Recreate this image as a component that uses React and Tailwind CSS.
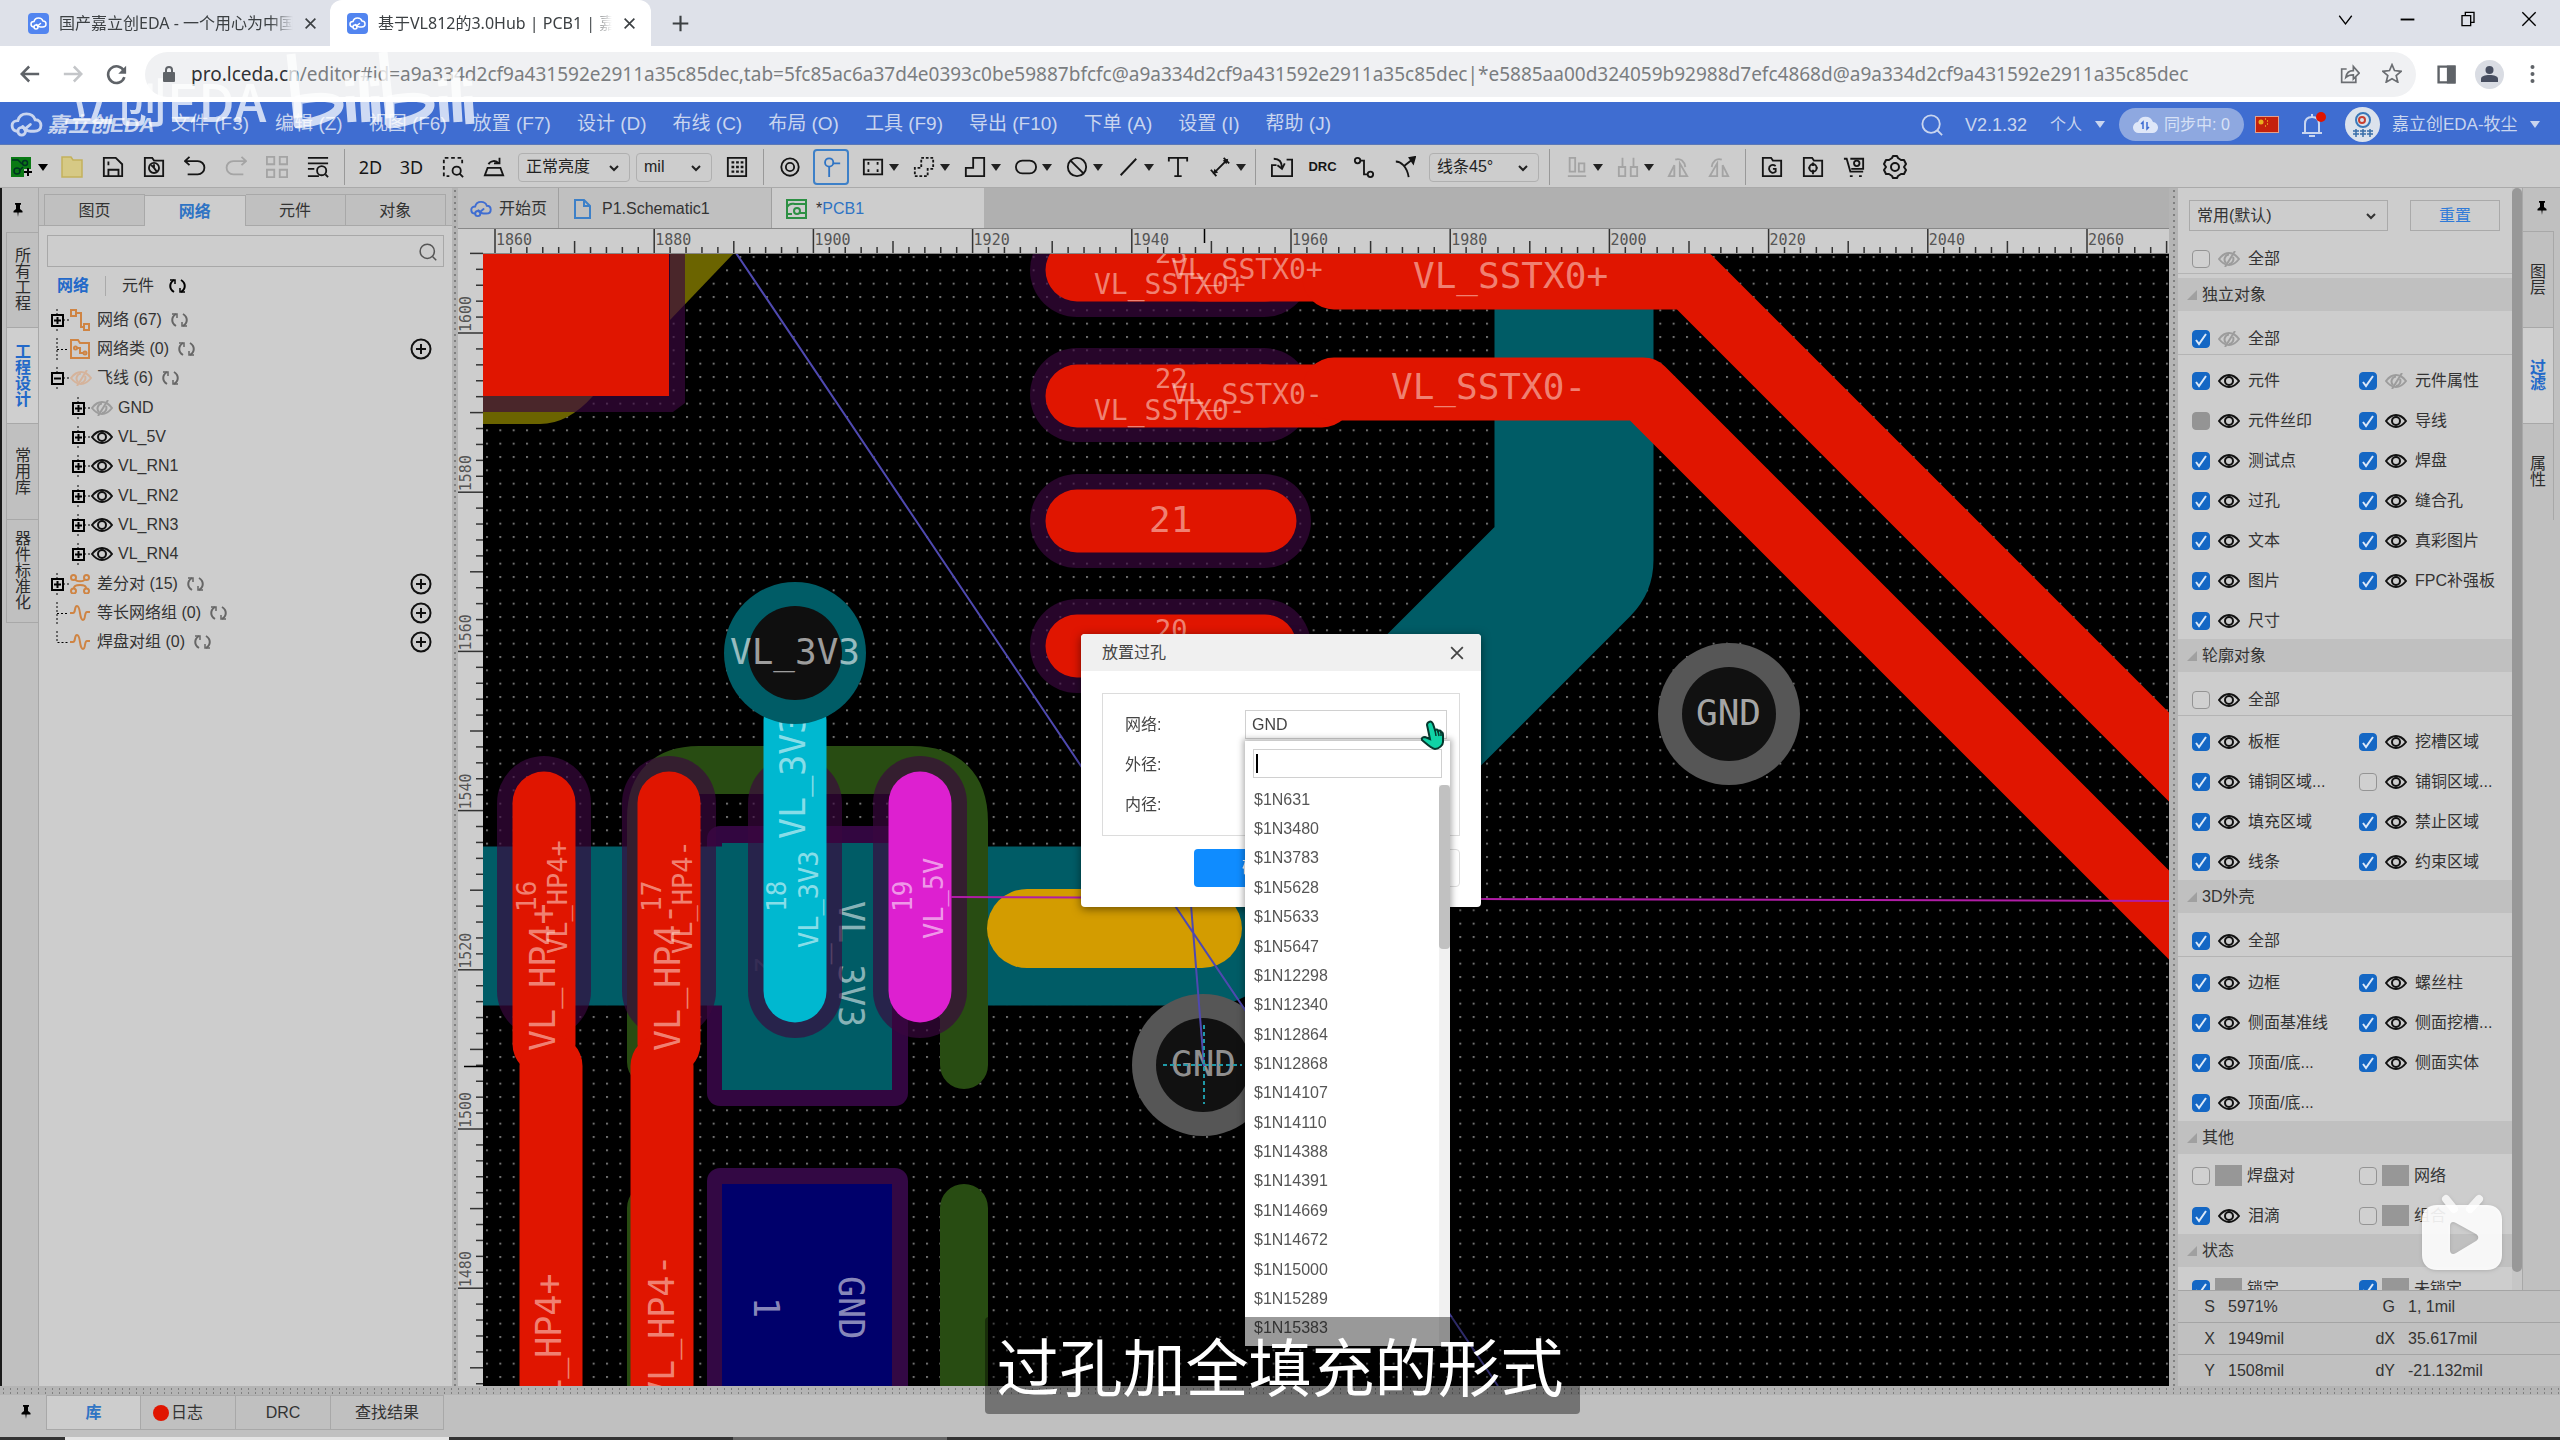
import React from "react";

function Icon({ children, w = 22, h = 22, vb = "0 0 24 24", className = "", sw = 2 }) {
  return (
    <svg width={w} height={h} viewBox={vb} fill="none" stroke="currentColor" strokeWidth={sw} className={"shrink-0 " + className} aria-hidden="true">
      {children}
    </svg>
  );
}

function Caret({ className = "" }) {
  return (
    <svg width="10" height="7" viewBox="0 0 10 7" className={"shrink-0 " + className} aria-hidden="true">
      <path d="M0 0h10L5 7z" fill="currentColor" />
    </svg>
  );
}

function Chevron({ className = "" }) {
  return (
    <Icon w={10} h={8} vb="0 0 10 8" sw={2} className={className}>
      <path d="M1 2l4 4 4-4" />
    </Icon>
  );
}

function Cloud({ w, h, className = "" }) {
  return (
    <Icon w={w} h={h} vb="0 0 34 26" sw={3} className={className}>
      <path d="M8 20C3 20 2 16 2 14c0-3 3-5 6-5 1-4 4-7 9-7 5 0 8 3 9 6 4 0 6 3 6 6 0 4-3 6-7 6h-4c-4 0-6-2-8-5" strokeLinecap="round" />
      <circle cx="12" cy="20" r="4" />
      <path d="M15 18l6-5" strokeLinecap="round" />
    </Icon>
  );
}

function Pin() {
  return (
    <svg width="10" height="14" viewBox="0 0 10 14" aria-hidden="true">
      <path d="M2 0h6v1.500l-1 .5v4l2.500 2v1.500H5.600L5 14l-.6-4.500H.5V8L3 6V2l-1-.5z" fill="#000" />
    </svg>
  );
}

function Refresh({ className = "text-[#666]" }) {
  return (
    <Icon w={17} h={16} vb="0 0 17 16" sw={2} className={className}>
      <path d="M5 14C0 11 0 5 5 2M12 2c5 3 5 9 0 12" />
      <path d="M1 2h5v4M16 14h-5v-4" strokeWidth="1.500" />
    </Icon>
  );
}

function Eye({ off }) {
  return off ? (
    <Icon w={22} h={16} vb="0 0 22 16" sw={2} className="opacity-70">
      <path d="M1 8c3-4 6-6 10-6s7 2 10 6c-3 4-6 6-10 6S4 12 1 8z" />
      <path d="M8 12a5 5 0 0 1 3-8.500M11 13a5 5 0 0 0 4-7M17 0L7 16" />
    </Icon>
  ) : (
    <Icon w={22} h={16} vb="0 0 22 16" sw={2}>
      <path d="M1 8c3-4 6-6 10-6s7 2 10 6c-3 4-6 6-10 6S4 12 1 8z" />
      <circle cx="11" cy="8" r="4" />
    </Icon>
  );
}

function Plus() {
  return (
    <Icon w={22} h={22} vb="0 0 22 22" sw={2}>
      <circle cx="11" cy="11" r="9.500" />
      <path d="M11 6v10M6 11h10" />
    </Icon>
  );
}

/* ---------- browser chrome ---------- */

function Favicon() {
  return (
    <span className="grid h-[21px] w-[21px] shrink-0 place-items-center rounded bg-[#5285f0] text-white">
      <Cloud w={17} h={13} />
    </span>
  );
}

function TabStrip() {
  return (
    <div className="flex h-[46px] items-stretch bg-[#dee1e9] font-['Noto_Sans','Noto_Sans_CJK_SC',sans-serif] text-base text-[#3c4043]">
      <div className="flex w-[330px] items-center pl-[28px] pr-2">
        <Favicon />
        <span className="ml-[10px] w-[234px] overflow-hidden whitespace-nowrap mask-r-from-90%">国产嘉立创EDA - 一个用心为中国人</span>
        <button aria-label="关闭标签页" className="ml-[11px]">
          <Icon w={13} h={13} sw={3}><path d="M3 3l18 18M21 3L3 21" /></Icon>
        </button>
      </div>
      <div className="flex w-[321px] items-center rounded-t-xl bg-white pl-[17px] pr-2">
        <Favicon />
        <span className="ml-[10px] w-[234px] overflow-hidden whitespace-nowrap mask-r-from-90%">基于VL812的3.0Hub | PCB1 | 嘉立创EDA</span>
        <button aria-label="关闭标签页" className="ml-[11px]">
          <Icon w={13} h={13} sw={3}><path d="M3 3l18 18M21 3L3 21" /></Icon>
        </button>
      </div>
      <button aria-label="新标签页" className="w-[58px] grid place-items-center">
        <Icon w={17} h={17} sw={3}><path d="M12 1v22M1 12h22" /></Icon>
      </button>
      <div className="flex-1" />
      <div className="flex h-[38px] text-black">
        <button aria-label="搜索标签页" className="grid w-[62px] place-items-center">
          <Icon w={15} h={15} sw={2}><path d="M2 6l10 13L22 6" /></Icon>
        </button>
        <button aria-label="最小化" className="grid w-[62px] place-items-center">
          <Icon w={15} h={15} sw={3}><path d="M1 12h22" /></Icon>
        </button>
        <button aria-label="还原" className="grid w-[60px] place-items-center">
          <Icon w={16} h={16} sw={2}><path d="M3 7h13v15H3zM8 6V2h13v15h-4" /></Icon>
        </button>
        <button aria-label="关闭" className="grid w-[62px] place-items-center">
          <Icon w={16} h={16} sw={2}><path d="M2 2l20 20M22 2L2 22" /></Icon>
        </button>
      </div>
    </div>
  );
}

function AddressBar() {
  return (
    <div className="flex h-14 items-center bg-white font-['Noto_Sans',sans-serif]">
      <div className="flex w-[145px] items-center gap-[23px] pl-5 text-[#5f6368]">
        <button aria-label="后退"><Icon w={20} h={20} sw={3}><path d="M23 12H2M11 3l-9 9 9 9" /></Icon></button>
        <button aria-label="前进" className="text-[#c4c6c9]"><Icon w={20} h={20} sw={3}><path d="M1 12h21M13 3l9 9-9 9" /></Icon></button>
        <button aria-label="重新加载">
          <Icon w={21} h={21} sw={3}><path d="M20.500 8A9.500 9.500 0 1 0 21 15" /><path d="M23 2v9h-9z" fill="currentColor" stroke="none" /></Icon>
        </button>
      </div>
      <label className="flex h-[45px] flex-1 items-center rounded-full bg-[#f0f1f3] pl-[18px] pr-[14px]">
        <svg width="12" height="16" viewBox="0 0 12 16" className="shrink-0" aria-hidden="true">
          <rect y="6" width="12" height="10" rx="1" fill="#5f6368" />
          <path d="M3 6V4a3 3 0 0 1 6 0v2" fill="none" stroke="#5f6368" strokeWidth="2" />
        </svg>
        <span className="sr-only">地址</span>
        <span className="ml-4 flex-1 overflow-hidden whitespace-nowrap text-[19px] text-[#7a7d80]" role="textbox" tabIndex={0}>
          <span className="text-[#303236]">pro.lceda.cn</span>/editor#id=a9a334d2cf9a431592e2911a35c85dec,tab=5fc85ac6a37d4e0393c0be59887bfcfc@a9a334d2cf9a431592e2911a35c85dec|*e5885aa00d324059b92988d7efc4868d@a9a334d2cf9a431592e2911a35c85dec
        </span>
        <span className="flex gap-[22px] text-[#6b6e72]">
          <Icon w={20} h={22} sw={2}><path d="M8 6H2v16h17v-6M7 16c1-6 5-8 9-8V3l7 8-7 7v-5c-4 0-7 1-9 3z" /></Icon>
          <Icon w={20} h={20} sw={2}><path d="M12 2l3 7 8 1-6 5 2 8-7-4-7 4 2-8-6-5 8-1z" /></Icon>
        </span>
      </label>
      <div className="flex w-[144px] items-center pl-[21px] text-[#5f6368]">
        <Icon w={19} h={19} sw={3}><path d="M2 2h20v20H2z" /><path d="M14 2h8v20h-8z" fill="currentColor" /></Icon>
        <span className="ml-[19px] grid h-[29px] w-[29px] place-items-center rounded-full bg-[#d9dce3]">
          <svg width="17" height="17" viewBox="0 0 17 17" fill="#474e60" aria-hidden="true"><circle cx="8.500" cy="4" r="4" /><path d="M0 16v-3c0-3 4-4 8.500-4s8.500 1 8.500 4v3z" /></svg>
        </span>
        <button aria-label="菜单" className="ml-[26px]">
          <svg width="5" height="18" viewBox="0 0 5 18" fill="#5f6368" aria-hidden="true"><circle cx="2.500" cy="2" r="2" /><circle cx="2.500" cy="9" r="2" /><circle cx="2.500" cy="16" r="2" /></svg>
        </button>
      </div>
    </div>
  );
}

/* ---------- application bars ---------- */

const MENUS = ["文件 (F3)", "编辑 (Z)", "视图 (F6)", "放置 (F7)", "设计 (D)", "布线 (C)", "布局 (O)", "工具 (F9)", "导出 (F10)", "下单 (A)", "设置 (I)", "帮助 (J)"];

function MenuBar() {
  return (
    <div className="flex h-[43px] items-center border-b border-[#5a78b8] bg-[#3f6dd1] pt-[3px] text-[#c9d5ef]">
      <a href="#home" className="flex w-[158px] items-center pl-[10px]">
        <Cloud w={33} h={25} />
        <span className="ml-1 whitespace-nowrap text-[21px] font-bold italic">嘉立创EDA</span>
      </a>
      <nav className="flex text-[19px]">
        {MENUS.map((m) => (
          <button key={m} className="whitespace-nowrap px-[13px]">{m}</button>
        ))}
      </nav>
      <div className="flex-1" />
      <div className="flex shrink-0 items-center whitespace-nowrap text-base">
        <button aria-label="搜索"><Icon w={22} h={22} sw={2}><circle cx="11" cy="11" r="9.500" /><path d="M18 18l5 5" /></Icon></button>
        <span className="ml-[22px] w-[85px] text-lg">V2.1.32</span>
        <button className="flex w-[69px] items-center gap-[13px]">个人<Caret /></button>
        <button className="flex h-[33px] w-[125px] items-center rounded-full bg-[#8ea8e0] pl-[14px] text-[#d7e1f6]">
          <svg width="25" height="19" viewBox="0 0 25 19" aria-hidden="true">
            <path d="M6 18a5.500 5.500 0 0 1-1-11A8 8 0 0 1 20 7a5.500 5.500 0 0 1-1 11z" fill="#dfe7f8" />
            <path d="M10 14V7l-2 2M14 7v7l2-2" fill="none" stroke="#3f6dd1" strokeWidth="1.500" />
          </svg>
          <span className="ml-[6px]">同步中: 0</span>
        </button>
        <svg width="24" height="17" viewBox="0 0 24 17" className="ml-[11px]" aria-hidden="true">
          <rect width="24" height="17" fill="#e3a08c" /><rect x="1" y="1" width="22" height="15" fill="#c4210c" />
          <circle cx="6" cy="6" r="2.500" fill="#e8b020" /><path d="M10 3h1M12 5h1M12 8h1M10 10h1" stroke="#e8b020" strokeWidth="1.500" />
        </svg>
        <button aria-label="通知" className="ml-[22px] flex w-[44px]">
          <svg width="26" height="26" viewBox="0 0 26 26" fill="none" stroke="#c9d5ef" strokeWidth="2" aria-hidden="true">
            <path d="M1 21h20M4 21v-9c0-5 3-7 7-7s7 2 7 7v9M11 5V2M8 24h6" /><circle cx="20" cy="5" r="5" fill="#e01500" stroke="none" />
          </svg>
        </button>
        <span className="grid h-[35px] w-[35px] place-items-center rounded-full bg-[#dbe2ec]">
          <svg width="28" height="28" viewBox="0 0 28 28" fill="none" aria-hidden="true">
            <circle cx="14" cy="9" r="7" stroke="#3a78b8" strokeWidth="2" /><circle cx="13" cy="9" r="3" stroke="#c84030" strokeWidth="2" />
            <path d="M4 20h6M4 23h6M11 20h6M11 23h6M18 20h6M18 23h6M7 18v8M14 18v8M21 18v8" stroke="#3a6ea8" strokeWidth="1.500" />
          </svg>
        </span>
        <button className="ml-[12px] flex w-[168px] items-center gap-[12px] text-[17px]">嘉立创EDA-牧尘<Caret /></button>
      </div>
    </div>
  );
}

function Tool({ label, children, dim, active }) {
  return (
    <button aria-label={label} className={"grid h-9 w-[41px] shrink-0 place-items-center " + (dim ? "text-[#a4a4a4]" : "text-[#151515]")}>
      {active ? <span className="grid h-9 w-9 place-items-center rounded border-2 border-[#3d80c8] text-[#2f74c4]">{children}</span> : children}
    </button>
  );
}

function DropTool({ label, children, dim }) {
  return (
    <button aria-label={label} className={"flex h-9 w-[51px] shrink-0 items-center gap-[5px] pl-[11px] " + (dim ? "text-[#a4a4a4]" : "text-[#151515]")}>
      {children}
      <Caret className="text-[#222]" />
    </button>
  );
}

function Sep({ className = "" }) {
  return <div className={"flex h-9 w-3 shrink-0 justify-center " + className}><div className="w-px bg-[#999]" /></div>;
}

function ToolSelect({ label, value, className }) {
  return (
    <div className={"relative shrink-0 " + className}>
      <select aria-label={label} defaultValue={value} className="h-[29px] w-full appearance-none rounded-sm border border-[#b0b0b0] bg-transparent pl-[7px] text-base leading-[26px] text-[#222]">
        <option>{value}</option>
      </select>
      <Chevron className="pointer-events-none absolute right-[11px] top-[11px] text-[#222]" />
    </div>
  );
}

function Toolbar() {
  return (
    <div className="flex h-[43px] items-center border-b border-[#aaa] bg-[#cdcdcd] pl-[7px] pt-[2px]">
      <button aria-label="新建" className="flex h-9 w-[44px] shrink-0 items-center gap-[5px] pl-1">
        <svg width="22" height="22" viewBox="0 0 22 22" aria-hidden="true">
          <path d="M0 1h20v12h-7v8H0z" fill="#0a7a14" /><circle cx="6" cy="15" r="3" fill="none" stroke="#032" strokeWidth="1.500" />
          <circle cx="14" cy="7" r="2.500" fill="none" stroke="#032" strokeWidth="1.500" /><path d="M1 4h6l4 4M8 15l4-4" stroke="#032" strokeWidth="1.500" fill="none" />
          <path d="M17 12v8M13 16h8" stroke="#000" strokeWidth="2" />
        </svg>
        <Caret />
      </button>
      <Tool label="打开"><svg width="22" height="22" viewBox="0 0 22 22" aria-hidden="true"><path d="M1 1h9l2 3h9v17H1z" fill="#d6c985" stroke="#c3b15c" strokeWidth="1.500" /></svg></Tool>
      <Tool label="保存"><Icon><path d="M2 2h13l7 7v13H2zM7 22v-7h11v7M7 6v4" /></Icon></Tool>
      <Tool label="历史"><Icon><path d="M2 22V2h8l2 3h10v17z" /><circle cx="12" cy="13" r="5.500" /><path d="M12 9v4l3 4M9 10l3 3" /></Icon></Tool>
      <Tool label="撤销"><Icon><path d="M6 1L1 5.500 6 10M1 5.500h14a7 7 0 0 1 0 14.500H4" /></Icon></Tool>
      <Tool label="重做" dim><Icon><path d="M18 1l5 4.500-5 4.500M23 5.500H9A7 7 0 0 0 9 20h11" /></Icon></Tool>
      <Tool label="阵列" dim><Icon><path d="M1 1h8v8H1zM15 1h8v8h-8zM1 15h8v8H1zM15 15h8v8h-8z" /></Icon></Tool>
      <Tool label="查找"><Icon><path d="M1 2h22M1 8h22M1 14h7M1 22h12" /><circle cx="16" cy="16" r="5" /><path d="M20 20l3 3" /></Icon></Tool>
      <Sep />
      <Tool label="2D"><span className="font-['Noto_Sans',sans-serif] text-lg">2D</span></Tool>
      <Tool label="3D"><span className="font-['Noto_Sans',sans-serif] text-lg">3D</span></Tool>
      <Tool label="框选查找"><Icon><path d="M2 8V2h20v6M2 11v11h6" strokeDasharray="4 3" /><circle cx="16" cy="16" r="4.500" /><path d="M19 19l4 4" /></Icon></Tool>
      <Tool label="翻转"><Icon><path d="M5 13h14l3 8H2zM6 9c2-4 8-5 11-1M18 2v6h-6" /></Icon></Tool>
      <ToolSelect label="亮度" value="正常亮度" className="ml-1 w-[112px]" />
      <ToolSelect label="单位" value="mil" className="ml-[6px] w-[76px]" />
      <div className="w-1" />
      <Tool label="网格"><Icon><path d="M2 2h20v20H2z" /><path d="M6 7h3M11 7h3M16 7h3M6 12h3M11 12h3M16 12h3M6 17h3M11 17h3M16 17h3" strokeWidth="2.500" /></Icon></Tool>
      <Sep />
      <Tool label="焊盘"><Icon><circle cx="12" cy="12" r="9.500" /><circle cx="12" cy="12" r="4.500" /></Icon></Tool>
      <Tool label="过孔" active><Icon><circle cx="10" cy="7" r="4.500" /><path d="M14 8h8M10 12v11" /></Icon></Tool>
      <DropTool label="填充"><Icon><path d="M2 4h20v16H2z" /><path d="M6 8h2M16 8h2M6 16h2M16 16h2" strokeWidth="3" /></Icon></DropTool>
      <DropTool label="区域"><Icon><path d="M9 2h13v12h-6v8H2v-9h7z" strokeDasharray="3 2" /></Icon></DropTool>
      <DropTool label="铺铜"><Icon><path d="M10 2h12v20H2v-9h8z" /></Icon></DropTool>
      <DropTool label="形状"><Icon><rect x="1" y="5" width="22" height="14" rx="7" /></Icon></DropTool>
      <DropTool label="禁止"><Icon><circle cx="12" cy="12" r="10" /><path d="M5 5l14 14" /></Icon></DropTool>
      <DropTool label="线条"><Icon><path d="M4 21L21 3" /></Icon></DropTool>
      <Tool label="文本"><Icon><path d="M2 6V2h20v4M12 2v20M8 22h8" /></Icon></Tool>
      <DropTool label="尺寸"><Icon><path d="M5 19L20 4M2 15l6 7M16 2l6 6" /><path d="M4 20l2-6 4 4zM21 3l-6 2 4 4z" fill="currentColor" stroke="none" /></Icon></DropTool>
      <Sep />
      <Tool label="导入"><Icon><path d="M6 10H1v12h22V4h-6M3 3c5 0 9 3 9 10M7 10l5 4 3-6" /></Icon></Tool>
      <Tool label="设计规则检查"><span className="text-[13px] font-bold">DRC</span></Tool>
      <Tool label="布线"><Icon><circle cx="5" cy="5" r="3" /><circle cx="19" cy="20" r="3" /><path d="M8 5h4v15h4" /></Icon></Tool>
      <Tool label="差分布线"><Icon><path d="M2 6c5 0 12 5 14 17M11 11l10-8" /><path d="M17 2l6-1-2 7z" fill="currentColor" /></Icon></Tool>
      <ToolSelect label="线条角度" value="线条45°" className="ml-1 w-[110px]" />
      <Sep className="ml-1" />
      <DropTool label="对齐" dim><Icon><path d="M4 2h6v15H4zM14 8h6v9h-6zM2 22h20" /></Icon></DropTool>
      <DropTool label="分布" dim><Icon><path d="M2 12h7v10H2zM15 12h7v10h-7zM6 2v10M18 2v10" /></Icon></DropTool>
      <Tool label="左旋转" dim><Icon><path d="M8 10v12H2zM14 22V8l8 14zM9 4c6-2 10 2 11 8" /></Icon></Tool>
      <Tool label="右旋转" dim><Icon><path d="M16 10v12h6zM10 22V8L2 22zM15 4C9 2 5 6 4 12" /></Icon></Tool>
      <Sep />
      <Tool label="导出 Gerber"><Icon><path d="M2 22V2h9l2 3h9v17zM16 11c-4-3-8 0-7 4s5 4 7 2v-3h-3" /></Icon></Tool>
      <Tool label="导出坐标"><Icon><path d="M2 22V2h9l2 3h9v17z" /><circle cx="12" cy="13" r="4" /><path d="M12 7v4M12 15v5M7 13h2M15 13h2" /></Icon></Tool>
      <Tool label="下单"><Icon><path d="M1 3h3l4 14h14M8 3h14v11H9" /><circle cx="15" cy="8" r="3" /><path d="M9 21v2M19 21v2" strokeWidth="3" /></Icon></Tool>
      <Tool label="设置"><Icon w={24} h={24}><path d="M9 3l1-2h4l1 2 3 2 3 0 2 4-2 3 2 3-2 4h-3l-3 2-1 2h-4l-1-2-3-2H3l-2-4 2-3-2-3 2-4h3z" strokeLinejoin="round" /><circle cx="12" cy="12" r="4" /></Icon></Tool>
    </div>
  );
}

/* ---------- left side ---------- */

function SideTab({ text, active, className = "", side }) {
  return (
    <button
      className={
        "flex justify-center border-[#a8a8a8] " +
        (side === "l" ? "border-l border-t pl-px " : "w-[31px] border-b border-r ") +
        (active ? "bg-[#cfcfcf] font-bold text-[#2369c9] " : "text-[#2c2c2c] ") + className
      }
    >
      <span className="w-4 break-all text-base leading-4">{text}</span>
    </button>
  );
}

function Expand({ open }) {
  return (
    <svg width="19" height="22" viewBox="0 0 19 22" fill="none" stroke="#000" className="shrink-0" aria-hidden="true">
      <path d="M7 0v22M13 11h6" strokeDasharray="2 2" />
      <rect x="2" y="6" width="11" height="11" fill="#cdcdcd" strokeWidth="2" />
      <path d={open ? "M4 11.500h7" : "M4 11.500h7M7.500 8v7"} strokeWidth="2" />
    </svg>
  );
}

function Elbow({ last }) {
  return (
    <svg width="19" height="22" viewBox="0 0 19 22" fill="none" stroke="#000" strokeDasharray="2 2" className="shrink-0" aria-hidden="true">
      <path d={last ? "M7 0v11.500h12" : "M7 0v22M7 11.500h12"} />
    </svg>
  );
}

function TreeRow({ lead, icon, text, refresh, add, nested }) {
  return (
    <li className={"flex items-center pr-[20px] " + (nested ? "pl-[32px]" : "pl-[11px]")}>
      {lead}
      <span className="ml-px flex w-[27px] shrink-0">{icon}</span>
      <span className="whitespace-nowrap">{text}</span>
      {refresh && <span className="ml-[9px]"><Refresh /></span>}
      <span className="flex-1" />
      {add && <button aria-label={"添加" + text} className="text-[#111]"><Plus /></button>}
    </li>
  );
}

function NetIcon() {
  return <Icon w={20} h={22} vb="0 0 20 22" className="text-[#cf8443]"><path d="M1 1h5v6H1zM14 15h5v6h-5zM6 4h5v14h3" /></Icon>;
}
function WaveIcon() {
  return <Icon w={20} h={18} vb="0 0 20 18" className="text-[#cf8443]"><path d="M0 9h3c3 0 1-7 4-7 4 0 2 14 6 14 3 0 1-8 4-8h3" /></Icon>;
}

function LeftPanel() {
  return (
    <>
      <div className="flex w-[38px] shrink-0 flex-col border-l-2 border-l-[#1a1a1a] bg-[#c0c0c0] pl-1">
        <div className="flex h-[44px] items-center pl-[7px]"><Pin /></div>
        <SideTab side="l" text="所有工程" className="h-[95px] items-center" />
        <SideTab side="l" text="工程设计" active className="h-[96px] items-center" />
        <SideTab side="l" text="常用库" className="h-[96px] items-center" />
        <SideTab side="l" text="器件标准化" className="h-[104px] items-center border-b" />
      </div>
      <div className="flex w-[414px] shrink-0 flex-col border-l border-[#a8a8a8] bg-[#cdcdcd] text-base text-[#333]">
        <div className="flex h-[38px] items-end border-b border-[#a8a8a8] bg-[#c0c0c0] pl-[5px] pr-[6px]" role="tablist">
          {["图页", "网络", "元件", "对象"].map((t, i) => (
            <button key={t} role="tab" aria-selected={i === 1} className={"h-[31px] flex-1 border-r border-t border-[#a8a8a8] pt-px " + (i === 1 ? "-mb-px h-8 bg-[#cdcdcd] font-bold text-[#2f74c4]" : i === 0 ? "border-l" : "")}>{t}</button>
          ))}
        </div>
        <label className="mx-[8px] mt-[9px] flex h-[32px] items-center border border-[#a8a8a8] pr-[6px] pt-px text-[#555]">
          <input aria-label="搜索网络" className="h-full min-w-0 flex-1 bg-transparent px-2 outline-none" />
          <Icon w={18} h={18} sw={2}><circle cx="11" cy="11" r="9.500" /><path d="M18 18l5 5" /></Icon>
        </label>
        <div className="flex h-[38px] items-center pl-[18px]">
          <button className="font-bold text-[#2369c9]">网络</button>
          <span className="mx-[16px] h-5 w-px bg-[#aaa]" />
          <button>元件</button>
          <button aria-label="刷新" className="ml-[15px]"><Refresh className="text-black" /></button>
        </div>
        <ul className="grid h-[352px] grid-rows-12">
          <TreeRow lead={<Expand />} icon={<NetIcon />} text="网络 (67)" refresh />
          <TreeRow lead={<Elbow />} icon={<Icon w={20} h={20} vb="0 0 20 20" className="text-[#cf8443]"><path d="M1 19V1h7l2 3h9v15zM7 9h3v5h3" /><circle cx="5.500" cy="9" r="1.500" /><circle cx="15" cy="14" r="1.500" /></Icon>} text="网络类 (0)" refresh add />
          <TreeRow lead={<Expand open />} icon={<span className="text-[#d9a987]"><Eye off /></span>} text="飞线 (6)" refresh />
          <TreeRow nested lead={<Expand />} icon={<span className="text-[#888]"><Eye off /></span>} text="GND" />
          <TreeRow nested lead={<Expand />} icon={<span className="text-[#111]"><Eye /></span>} text="VL_5V" />
          <TreeRow nested lead={<Expand />} icon={<span className="text-[#111]"><Eye /></span>} text="VL_RN1" />
          <TreeRow nested lead={<Expand />} icon={<span className="text-[#111]"><Eye /></span>} text="VL_RN2" />
          <TreeRow nested lead={<Expand />} icon={<span className="text-[#111]"><Eye /></span>} text="VL_RN3" />
          <TreeRow nested lead={<Expand />} icon={<span className="text-[#111]"><Eye /></span>} text="VL_RN4" />
          <TreeRow lead={<Expand />} icon={<Icon w={20} h={20} vb="0 0 20 20" className="text-[#cf8443]"><circle cx="3.500" cy="3.500" r="2.500" /><circle cx="16.500" cy="3.500" r="2.500" /><circle cx="3.500" cy="17" r="2.500" /><circle cx="16.500" cy="17" r="2.500" /><path d="M5 5c1 3 9 3 10 0M4 14c0-4 12-4 12 0" /></Icon>} text="差分对 (15)" refresh add />
          <TreeRow lead={<Elbow />} icon={<WaveIcon />} text="等长网络组 (0)" refresh add />
          <TreeRow lead={<Elbow last />} icon={<WaveIcon />} text="焊盘对组 (0)" refresh add />
        </ul>
      </div>
    </>
  );
}

function Splitter({ className = "", horizontal }) {
  return (
    <div className={"flex shrink-0 items-center justify-center bg-[#b4b4b4] " + className}>
      <div className={horizontal ? "h-[7px] w-full bg-[radial-gradient(#808080_1px,transparent_1px)] bg-size-[7px_4px]" : "h-full w-[4px] bg-[radial-gradient(#808080_1px,transparent_1px)] bg-size-[4px_6px]"} />
    </div>
  );
}

/* ---------- board canvas ---------- */

const UNIT = 7.96;
const range = (a, b, s) => Array.from({ length: Math.floor((b - a) / s) + 1 }, (_, i) => a + i * s);

function Label({ x, y, s = 36, r = 0, fill = "#fff", o = 0.55, children }) {
  return (
    <text transform={`translate(${x} ${y}) rotate(${r})`} fontSize={s} fill={fill} fillOpacity={o} fontFamily="'DejaVu Sans Mono', monospace">
      {children}
    </text>
  );
}

function Rulers() {
  return (
    <g>
      <rect x="458" y="228" width="2200" height="25" fill="#cdcdcd" />
      <rect x="458" y="228" width="25" height="1600" fill="#cdcdcd" />
      <path d="M458 228.500H2700M470 253.500H2700" stroke="#888" />
      {range(1860, 2080, 2).map((u) => {
        const x = 495 + (u - 1860) * UNIT;
        const y = u % 20 === 0 ? 229 : u % 10 === 0 ? 241 : 247;
        return <path key={u} d={`M${x} ${y}V253`} stroke="#333" strokeWidth="1.500" />;
      })}
      {range(1860, 2060, 20).map((u) => <text key={u} x={496 + (u - 1860) * UNIT} y="245" fontSize="15" fill="#555" fontFamily="'DejaVu Sans Mono', monospace">{u}</text>)}
      {range(1468, 1610, 2).map((u) => {
        const y = 333 + (1600 - u) * UNIT;
        const x = u % 20 === 0 ? 458 : u % 10 === 0 ? 470 : 476;
        return <path key={u} d={`M${x} ${y}H483`} stroke="#333" strokeWidth="1.500" />;
      })}
      {range(1480, 1600, 20).map((u) => (
        <text key={u} transform={`translate(471 ${332 + (1600 - u) * UNIT}) rotate(-90)`} fontSize="15" fill="#555" fontFamily="'DejaVu Sans Mono', monospace">{u}</text>
      ))}
      <path d="M1204.500 229V243M464 1066.500H483" stroke="#000" strokeWidth="1.500" />
    </g>
  );
}

function Board() {
  const halo = { fill: "#3a073f", fillOpacity: 0.67 };
  const pink = "#ffe0d8";
  return (
    <svg viewBox="458 228 1711 1158" preserveAspectRatio="xMinYMin slice" className="block min-h-0 w-full flex-1" role="img" aria-label="PCB1">
      <defs>
        <pattern id="dots" x="486" y="256" width="13.333" height="13.333" patternUnits="userSpaceOnUse">
          <rect x="0" y="0" width="2" height="2" fill="#707070" />
        </pattern>
      </defs>
      <rect x="458" y="228" width="2200" height="1600" fill="#000" />
      <rect x="483" y="253" width="2200" height="1600" fill="url(#dots)" />

      <path d="M670 253H734L670 320z" fill="#6b6400" />
      <path d="M483 396H593Q568 424 540 424H483z" fill="#6b6400" />
      <path d="M483 253H685V403L673 412H483z" {...halo} />
      <rect x="483" y="253" width="186" height="143" fill="#e01500" />

      <rect x="707" y="826" width="201" height="280" rx="13" fill="#320640" />
      <path d="M1574 200V560L1208 926H483" fill="none" stroke="#005c66" strokeWidth="159" strokeLinejoin="round" />
      <rect x="722" y="843" width="170" height="247" fill="#005c66" />
      <rect x="707" y="1168" width="201" height="260" rx="13" fill="#330844" />
      <rect x="722" y="1184" width="170" height="220" fill="#00006b" />
      <Label x={839} y={901} s={35} r={90}>VL_3V3</Label>
      <Label x={755} y={957} r={90} s={27} o={0.2}>2</Label>
      <Label x={839} y={1276} s={35} r={90}>GND</Label>
      <Label x={754} y={1297} s={35} r={90}>1</Label>

      <path d="M651 1062V818Q651 770 699 770H912Q964 770 964 822V1065" fill="none" stroke="#284c12" strokeWidth="48" strokeLinecap="round" />
      <path d="M651 1420V1208M964 1420V1208" fill="none" stroke="#284c12" strokeWidth="48" strokeLinecap="round" />

      {[544, 669, 795, 920].map((x) => <rect key={x} x={x - 47} y="756" width="94" height="282" rx="47" {...halo} />)}
      <path d="M544 803V1044M669 803V1044" stroke="#e01500" strokeWidth="63" strokeLinecap="round" />
      <path d="M551 1066V1420M662 1066V1420" stroke="#e01500" strokeWidth="63" strokeLinecap="round" />
      <path d="M795 720V991" stroke="#00b8d0" strokeWidth="63" strokeLinecap="round" />
      <path d="M920 803V991" stroke="#dd20d0" strokeWidth="63" strokeLinecap="round" />
      <Label x={536} y={912} s={26} r={-90} fill={pink}>16</Label>
      <Label x={567} y={954} s={27} r={-90} fill={pink}>VL_HP4+</Label>
      <Label x={555} y={1051} s={35} r={-90} fill={pink}>VL_HP4+</Label>
      <Label x={561} y={1421} s={35} r={-90} fill={pink}>VL_HP4+</Label>
      <Label x={661} y={912} s={26} r={-90} fill={pink}>17</Label>
      <Label x={692} y={954} s={27} r={-90} fill={pink}>VL_HP4-</Label>
      <Label x={680} y={1051} s={35} r={-90} fill={pink}>VL_HP4-</Label>
      <Label x={674} y={1402} s={35} r={-90} fill={pink}>VL_HP4-</Label>
      <Label x={786} y={912} s={26} r={-90}>18</Label>
      <Label x={818} y={948} s={27} r={-90}>VL_3V3</Label>
      <Label x={805} y={839} s={35} r={-90}>VL_3V3</Label>
      <Label x={912} y={912} s={26} r={-90}>19</Label>
      <Label x={943} y={939} s={27} r={-90}>VL_5V</Label>

      <circle cx="795" cy="653" r="71" fill="#005c66" />
      <circle cx="795" cy="653" r="47" fill="#0f0f0f" />
      <Label x={730} y={664} s={36} o={0.6}>VL_3V3</Label>

      {[270, 395, 521, 646].map((y) => <rect key={y} x="1030" y={y - 47} width="281" height="94" rx="47" {...halo} />)}
      <path d="M1077 270H1265M1077 396H1265M1077 521H1265M1077 646H1265" stroke="#e01500" strokeWidth="63" strokeLinecap="round" />
      <path d="M1200 270H1316M1200 396H1322" stroke="#e01500" strokeWidth="63" strokeLinecap="round" />
      <path d="M1334 278H1690L2700 1288M1334 389H1643L2700 1446" fill="none" stroke="#e01500" strokeWidth="63" strokeLinecap="round" strokeLinejoin="round" />
      <Label x={1155} y={263} s={27} fill={pink}>23</Label>
      <Label x={1094} y={294} s={28} fill={pink}>VL_SSTX0+</Label>
      <Label x={1171} y={279} s={28} fill={pink}>VL_SSTX0+</Label>
      <Label x={1413} y={288} fill={pink}>VL_SSTX0+</Label>
      <Label x={1155} y={388} s={27} fill={pink}>22</Label>
      <Label x={1094} y={420} s={28} fill={pink}>VL_SSTX0-</Label>
      <Label x={1171} y={404} s={28} fill={pink}>VL_SSTX0-</Label>
      <Label x={1391} y={399} fill={pink}>VL_SSTX0-</Label>
      <Label x={1149} y={532} fill={pink}>21</Label>
      <Label x={1155} y={639} s={27} fill={pink}>20</Label>

      <rect x="987" y="889" width="255" height="79" rx="40" fill="#d39c00" />
      <circle cx="1729" cy="714" r="71" fill="#565656" />
      <circle cx="1729" cy="714" r="47" fill="#111" />
      <Label x={1696} y={725} s={36} o={0.65}>GND</Label>
      <circle cx="1203" cy="1065" r="71" fill="#565656" />
      <circle cx="1203" cy="1065" r="47" fill="#111" />
      <Label x={1171} y={1076} s={36} o={0.55}>GND</Label>
      <path d="M951 897L1481 899L2169 901L2700 902" fill="none" stroke="#b01ca6" strokeWidth="2" />
      <path d="M736 253L1498 1386M1191 905L1204 1066" stroke="#4f49b0" strokeWidth="2" />
      <path d="M1163 1065H1242M1204 1025V1104" stroke="#1f9aa8" strokeWidth="2" strokeDasharray="4 3" />
      <Rulers />
    </svg>
  );
}

function Workspace() {
  return (
    <main className="flex min-w-0 flex-1 flex-col overflow-hidden">
      <div className="flex h-10 shrink-0 bg-[#b0b0b0] text-base text-[#333]" role="tablist">
        <button role="tab" className="flex w-[101px] items-center gap-[7px] border-r border-[#a0a0a0] bg-[#c0c0c0] pl-3 pt-px"><Cloud w={22} h={18} className="text-[#3f6dd1]" />开始页</button>
        <button role="tab" className="flex w-[213px] items-center gap-[11px] border-r border-[#a0a0a0] bg-[#c0c0c0] pl-[15px] pt-px">
          <Icon w={17} h={20} vb="0 0 17 20" className="text-[#3d80c8]"><path d="M1 1h9l6 6v12H1zM10 1v6h6" /></Icon>P1.Schematic1
        </button>
        <button role="tab" aria-selected="true" className="flex w-[212px] items-center gap-[9px] bg-[#cdcdcd] pl-[14px] pt-px text-[#2f74c4]">
          <Icon w={21} h={20} vb="0 0 21 20" className="text-[#2c9043]"><path d="M1 1h19v18H1zM1 8c3-5 6-3 8-3h11M1 15h5" /><circle cx="11" cy="12" r="3" /><path d="M14 14h5" /></Icon>
          <span><span className="text-[#333]">*</span>PCB1</span>
        </button>
      </div>
      <Board />
    </main>
  );
}

/* ---------- right side ---------- */

function Check({ state, eye, text, className = "" }) {
  return (
    <label className={"flex items-center pl-[14px] " + className}>
      <span className="grid shrink-0">
        <input
          type="checkbox"
          defaultChecked={state === 1}
          className={
            "col-start-1 row-start-1 h-[18px] w-[18px] appearance-none rounded-sm border " +
            (state === 1 ? "border-[#1467c4] bg-[#1467c4]" : state === 2 ? "border-[#949494] bg-[#949494]" : "border-[#949494] bg-[#d0d0d0]")
          }
        />
        {state === 1 && (
          <Icon w={18} h={18} vb="0 0 18 18" sw={2} className="pointer-events-none col-start-1 row-start-1 text-[#dbe8f8]"><path d="M4 10l3 4 7-10" /></Icon>
        )}
      </span>
      {eye === 2 ? (
        <span className="ml-[5px] mr-[5px] h-[21px] w-[27px] shrink-0 bg-[#979797]" />
      ) : (
        <span className={"ml-2 mr-[8px] " + (eye ? "text-[#111]" : "text-[#888]")}><Eye off={!eye} /></span>
      )}
      <span className="whitespace-nowrap">{text}</span>
    </label>
  );
}

const SECTIONS = [
  { title: "独立对象", all: [1, 0], items: [["元件", 1, 1], ["元件属性", 1, 0], ["元件丝印", 2, 1], ["导线", 1, 1], ["测试点", 1, 1], ["焊盘", 1, 1], ["过孔", 1, 1], ["缝合孔", 1, 1], ["文本", 1, 1], ["真彩图片", 1, 1], ["图片", 1, 1], ["FPC补强板", 1, 1], ["尺寸", 1, 1]] },
  { title: "轮廓对象", all: [0, 1], items: [["板框", 1, 1], ["挖槽区域", 1, 1], ["铺铜区域...", 1, 1], ["铺铜区域...", 0, 1], ["填充区域", 1, 1], ["禁止区域", 1, 1], ["线条", 1, 1], ["约束区域", 1, 1]] },
  { title: "3D外壳", all: [1, 1], items: [["边框", 1, 1], ["螺丝柱", 1, 1], ["侧面基准线", 1, 1], ["侧面挖槽...", 1, 1], ["顶面/底...", 1, 1], ["侧面实体", 1, 1], ["顶面/底...", 1, 1]] },
  { title: "其他", items: [["焊盘对", 0, 2], ["网络", 0, 2], ["泪滴", 1, 1], ["组合", 0, 2]] },
  { title: "状态", items: [["锁定", 1, 2], ["未锁定", 1, 2]] },
];

function FilterPanel() {
  return (
    <div className="w-[334px] shrink-0 overflow-hidden bg-[#cdcdcd]">
      <div className="flex pl-[11px] pr-3 pt-3">
        <div className="relative w-[199px]">
          <select aria-label="过滤方案" defaultValue="常用(默认)" className="h-[31px] w-full appearance-none border border-[#aaa] bg-transparent pl-[7px] pt-px"><option>常用(默认)</option></select>
          <Chevron className="pointer-events-none absolute right-[12px] top-[12px]" />
        </div>
        <button className="ml-[22px] h-[31px] flex-1 border border-[#aaa] text-[#2f7ad8]">重置</button>
      </div>
      <Check state={0} eye={0} text="全部" className="mb-1 h-[43px] border-b border-[#b4b4b4] pt-[13px]" />
      {SECTIONS.map((s) => (
        <section key={s.title}>
          <h3 className="flex h-[33px] items-center gap-[5px] bg-[#c0c0c0] pl-[9px]">
            <svg width="10" height="10" viewBox="0 0 10 10" aria-hidden="true"><path d="M10 0v10H0z" fill="#a0a0a0" /></svg>
            {s.title}
          </h3>
          {s.all && <Check state={s.all[0]} eye={s.all[1]} text="全部" className="mb-1 h-11 border-b border-[#b4b4b4] pt-[13px]" />}
          <div className="grid auto-rows-[40px] grid-cols-2">
            {s.items.map(([t, c, e], i) => <Check key={i} state={c} eye={e} text={t} className="pt-[3px]" />)}
          </div>
        </section>
      ))}
    </div>
  );
}

function StatusRow({ a, b, c, d }) {
  return (
    <div className="flex h-8 items-center border-t border-[#a4a4a4]">
      <span className="w-[37px] text-right">{a}</span>
      <span className="ml-[13px] w-[130px]">{b}</span>
      <span className="w-[37px] text-right">{c}</span>
      <span className="ml-[13px]">{d}</span>
    </div>
  );
}

function RightSide() {
  return (
    <aside className="flex w-[382px] shrink-0 flex-col text-base text-[#333]">
      <div className="flex min-h-0 flex-1 overflow-hidden">
        <FilterPanel />
        <div className="w-[10px] shrink-0 bg-[#c6c6c6] pb-[18px]"><div className="h-full rounded-full bg-[#989898]" /></div>
        <div className="flex flex-1 flex-col border-l border-[#a8a8a8] bg-[#c0c0c0]">
          <div className="flex h-[44px] w-[31px] items-center border-b border-[#a8a8a8] pb-1 pl-[14px]"><Pin /></div>
          <SideTab side="r" text="图层" className="h-24 items-center" />
          <SideTab side="r" text="过滤" active className="h-24 items-center" />
          <SideTab side="r" text="属性" className="h-24 items-center border-b-0" />
        </div>
      </div>
      <div className="shrink-0 bg-[#c0c0c0]">
        <StatusRow a="S" b="5971%" c="G" d="1, 1mil" />
        <StatusRow a="X" b="1949mil" c="dX" d="35.617mil" />
        <StatusRow a="Y" b="1508mil" c="dY" d="-21.132mil" />
      </div>
    </aside>
  );
}

function BottomBar() {
  return (
    <>
      <div className="flex h-[42px] shrink-0 items-start bg-[#c0c0c0] text-base text-[#333]" role="tablist">
        <div className="flex h-[34px] w-[46px] items-center pl-[21px]"><Pin /></div>
        <button role="tab" aria-selected="true" className="h-[35px] w-[95px] border border-[#a8a8a8] bg-[#cdcdcd] pt-px font-bold text-[#2f74c4]">库</button>
        <button role="tab" className="flex h-[35px] w-[95px] items-center justify-center gap-[2px] border-y border-r border-[#a8a8a8] pl-[4px] pr-6 pt-px"><span className="h-4 w-4 shrink-0 rounded-full bg-[#e01500]" /><span className="whitespace-nowrap">日志</span></button>
        <button role="tab" className="h-[35px] w-[95px] border-y border-r border-[#a8a8a8] pt-px">DRC</button>
        <button role="tab" className="h-[35px] w-[113px] border-y border-r border-[#a8a8a8] pt-px">查找结果</button>
      </div>
      <div className="flex h-[3px] shrink-0 bg-[#333]">
        <div className="ml-[65px] w-[384px] bg-[#e4e4e4]" />
        <div className="ml-[284px] w-[214px] bg-[#666]" />
      </div>
    </>
  );
}

/* ---------- overlays ---------- */

const NETS = ["$1N631", "$1N3480", "$1N3783", "$1N5628", "$1N5633", "$1N5647", "$1N12298", "$1N12340", "$1N12864", "$1N12868", "$1N14107", "$1N14110", "$1N14388", "$1N14391", "$1N14669", "$1N14672", "$1N15000", "$1N15289", "$1N15383"];

function NetDropdown() {
  return (
    <div className="absolute left-0 top-[31px] z-20 w-[205px] bg-white pb-[3px] pt-2 shadow-[0_0_6px_2px_rgba(0,0,0,0.3)]">
      <div className="mx-2">
        <input aria-label="筛选网络" className="block h-[29px] w-full border border-[#d0d0d0] outline-none" />
        <span className="absolute left-[11px] top-[13px] h-[19px] w-0.5 bg-black" />
      </div>
      <div className="mt-[7px] flex">
        <ul className="grid h-[558px] flex-1 auto-rows-fr" role="listbox" aria-label="网络">
          {NETS.map((n) => <li key={n} role="option" aria-selected="false" className="flex items-center pl-[9px] text-[#555]">{n}</li>)}
        </ul>
        <div className="w-[11px] bg-[#f1f1f1]"><div className="h-[164px] rounded bg-[#c1c1c1]" /></div>
      </div>
    </div>
  );
}

function ViaDialog() {
  return (
    <div className="pointer-events-none fixed inset-0 z-10 flex items-start justify-center pt-[634px] pl-[2px]">
      <div role="dialog" aria-label="放置过孔" className="pointer-events-auto w-[400px] rounded bg-white text-base text-[#444] shadow-[0_2px_10px_rgba(0,0,0,0.5)]">
        <div className="flex h-[37px] items-center justify-between rounded-t bg-[#f0f0f0] pl-[21px] pr-[17px]">
          <h2>放置过孔</h2>
          <button aria-label="关闭"><Icon w={14} h={14} sw={3}><path d="M2 2l20 20M22 2L2 22" /></Icon></button>
        </div>
        <div className="px-[21px] pb-5 pt-[22px]">
          <div className="flex h-[143px] flex-col gap-[11px] border border-[#dcdcdc] pl-[22px] pr-[12px] pt-4">
            <div className="flex h-[29px] items-center">
              <label htmlFor="net" className="w-[120px]">网络:</label>
              <div className="relative flex-1">
                <select id="net" defaultValue="GND" className="block h-[29px] w-full appearance-none border border-[#d0d0d0] bg-white pl-[6px]"><option>GND</option></select>
                <NetDropdown />
              </div>
            </div>
            <div className="flex h-[29px] items-center"><label htmlFor="outer" className="w-[120px]">外径:</label><input id="outer" className="h-[29px] min-w-0 flex-1 border border-[#d0d0d0]" /></div>
            <div className="flex h-[29px] items-center"><label htmlFor="inner" className="w-[120px]">内径:</label><input id="inner" className="h-[29px] min-w-0 flex-1 border border-[#d0d0d0]" /></div>
          </div>
          <div className="mt-[13px] flex justify-end gap-[10px]">
            <button className="h-[38px] w-32 rounded-sm bg-[#0f8cff] text-white">确认</button>
            <button className="h-[38px] w-32 rounded-sm border border-[#dcdcdc]">取消</button>
          </div>
        </div>
      </div>
    </div>
  );
}

function Pointer() {
  return (
    <svg width="24" height="30" viewBox="0 0 24 30" className="pointer-events-none fixed left-[1420px] top-[720px] z-30" aria-hidden="true">
      <path d="M9 2c2-1 3 0 4 2l2 6c2-1 3 0 3 1 2-1 3 0 3 1 1 0 2 1 2 3v7c0 3-4 7-8 7-3 0-6-3-13-9-1-2 1-3 3-3l5 2L7 5c0-1 1-3 2-3z" fill="#10d3a6" stroke="#06382e" strokeWidth="2" />
      <path d="M15 10l1 6M18 11l1 5M21 12l0 4" stroke="#06382e" strokeWidth="1.500" />
    </svg>
  );
}

function Watermark() {
  return (
    <div className="pointer-events-none fixed left-[63px] top-[50px] z-30 flex items-start text-white/75">
      <span className="mt-[25px] w-[220px] whitespace-nowrap font-['Noto_Sans_CJK_SC',sans-serif] text-[52px] font-medium leading-[50px]">立创EDA</span>
      <svg width="195" height="80" viewBox="0 0 195 80" fill="none" stroke="currentColor" strokeWidth="9" aria-hidden="true">
        <path d="M8 4L15 68M100 2l7 66" />
        <path d="M15 50c20-4 39-4 41 4 1 10-20 18-41 20zM107 50c20-4 38-4 40 4 1 10-20 18-40 20z" strokeLinejoin="round" />
        <path d="M67 46l2 26M80 22l3 50M92 46l2 26M160 46l2 26M172 22l3 50M185 46l2 28" />
        <path d="M66 28l1 8M91 28l1 8M159 28l1 8M184 28l1 8" />
      </svg>
    </div>
  );
}

function PlayerBadge() {
  return (
    <svg width="82" height="80" viewBox="0 0 82 80" className="pointer-events-none fixed bottom-[168px] right-[57px] z-30 drop-shadow" fillOpacity="0.9" aria-hidden="true">
      <path d="M25 7l8 10M58 7l-9 10" stroke="#f2f2f2" strokeWidth="8" strokeLinecap="round" />
      <path fillRule="evenodd" d="M16 13h50c9 0 15 6 15 14v36c0 9-6 15-15 15H16C7 78 1 72 1 63V27c0-8 6-14 15-14zM29 34v24c0 4 3 5 6 3l20-12c3-2 3-5 0-7L35 31c-3-2-6-1-6 3z" fill="#fff" />
    </svg>
  );
}

function Caption() {
  return (
    <div className="pointer-events-none fixed inset-x-0 bottom-[26px] z-30 flex justify-center pl-1">
      <p className="h-[97px] whitespace-nowrap rounded-sm bg-black/40 pl-[12px] pr-[16px] font-['Noto_Sans_CJK_SC',sans-serif] text-[63px] leading-[94px] text-white">过孔加全填充的形式</p>
    </div>
  );
}

export default function App() {
  return (
    <div className="flex h-screen flex-col overflow-hidden bg-[#c0c0c0] font-['Liberation_Sans','Noto_Sans_CJK_SC',sans-serif]">
      <TabStrip />
      <AddressBar />
      <MenuBar />
      <Toolbar />
      <div className="flex min-h-0 flex-1">
        <LeftPanel />
        <Splitter className="w-[6px]" />
        <Workspace />
        <Splitter className="w-[9px]" />
        <RightSide />
      </div>
      <Splitter horizontal className="h-[9px]" />
      <BottomBar />
      <ViaDialog />
      <Pointer />
      <PlayerBadge />
      <Watermark />
      <Caption />
    </div>
  );
}
